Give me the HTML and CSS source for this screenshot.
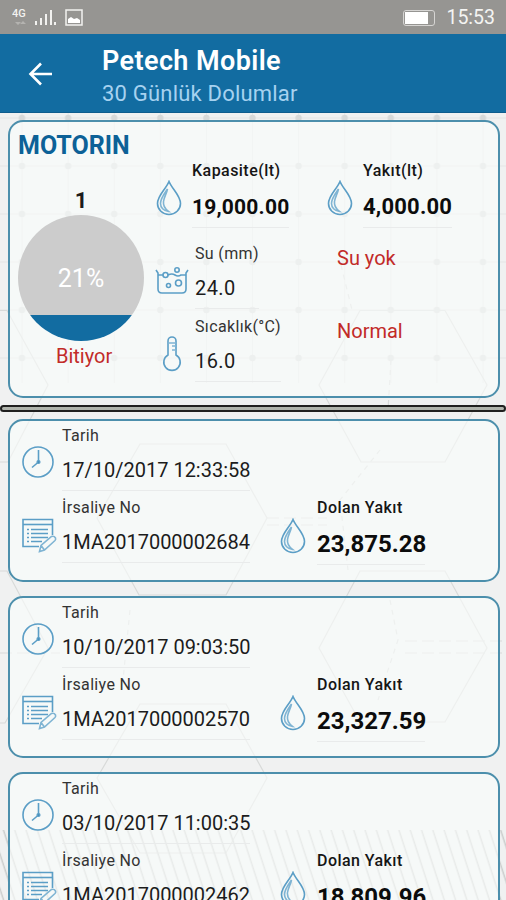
FILE: index.html
```html
<!DOCTYPE html>
<html lang="tr">
<head>
    <meta charset="UTF-8">
    <meta name="viewport" content="width=device-width, initial-scale=1.0">
    <title>Petech Mobile</title>
    <link rel="stylesheet" href="styles.css">
</head>
<body>
    <svg width="0" height="0" class="symbols">
        <symbol id="drop" viewBox="0 0 26 36">
            <path d="M13 1.5C10 9 1.5 15.500 1.500 23.500a11.500 11 0 0 0 23 0C24.500 15.500 16 9 13 1.500z"/>
            <path d="M11.500 9C8 14 4.500 18.500 4.500 23.500c0 4 3 7.500 8 8-4-3-5.500-6-5-10C8 17 10.500 14 11.500 9z" class="light"/>
        </symbol>
        <symbol id="clock" viewBox="0 0 32 32">
            <circle cx="16" cy="16" r="15"/>
            <path d="M16.500 4v12L10 21.500"/>
            <circle cx="16.500" cy="16" r="1.300" class="solid"/>
        </symbol>
        <symbol id="note" viewBox="0 0 35 35">
            <path d="M30.500 17V1.500H1V28.500H17"/>
            <path d="M1 6.500h29.500"/>
            <path d="M5 11.500h2M9 11.500h17M5 15.500h2M9 15.500h17M5 19.500h2M9 19.500h17M5 23.500h2M9 23.500h11"/>
            <path d="M17.500 33.500l1.500-6L29.500 18.500q2.500-1 4 1.500.5 1.500-.5 2.500L22.500 32zM19 27.500l3.500 4.500" class="light"/>
        </symbol>
    </svg>

    <svg class="backdrop" width="506" height="900" viewBox="0 0 506 900">
        <defs>
            <pattern id="dots" x="-1" y="94" width="46.100" height="48" patternUnits="userSpaceOnUse">
                <path d="M23 0v48M0 24h46.100" stroke="#e3e5e5" stroke-width="1"/>
                <circle cx="23" cy="24" r="3.200" fill="#d7d9d9"/>
            </pattern>
            <pattern id="stripes" x="0" y="830" width="11.300" height="12" patternUnits="userSpaceOnUse" patternTransform="skewX(18)">
                <path d="M5 0v12" stroke="#cbcdcc" stroke-width="1.600"/>
            </pattern>
        </defs>
        <rect y="113" width="506" height="270" fill="url(#dots)"/>
        <g fill="none" stroke="#d8dad9" stroke-width="1.200">
            <path d="M319 385L360 310.500H445L487 385 445 462H361z"/>
            <path d="M97 518L140 444H226L267 518 226 595H139z"/>
            <path d="M319 648L360 571H445L487 648 445 722H360z"/>
            <path d="M97 778L140 704H226L267 778 226 853H140z"/>
            <path d="M0 310.500H7L48 385 8 462H0M0 571H7L48 648 5 723H0"/>
            <path d="M267 518h60M267 525h60M405 641h101M405 653h101M0 653h60" stroke-dasharray="12 5"/>
            <path d="M341 265l11 45M391 360l-3 50M380 450l-40 50 8 70M130 610l-8 80M390 600l8 40-20 60" stroke-dasharray="5 5"/>
        </g>
        <rect y="830" width="506" height="70" fill="url(#stripes)"/>
    </svg>

    <header class="status-bar">
        <svg width="72" height="20" viewBox="0 0 72 20" class="status-icons">
            <text x="0" y="9" class="network">4G</text>
            <path d="M3 14h6l-3 3zM8 16h6l-3-3z" fill="#b4b3b0"/>
            <path d="M24 13v4M29 10v7M34 6v11M39 2v15M43 14v3" stroke="#f2f2f0" stroke-width="2"/>
            <rect x="54" y="2" width="16" height="15" fill="none" stroke="#f2f2f0" stroke-width="1.500"/>
            <path d="M56 15v-4l3-2 3 2 3-1 3 2v3z" fill="#fff"/>
        </svg>
        <div class="status-right">
            <span class="battery"><span class="battery-level"></span></span>
            <span class="time">15:53</span>
        </div>
    </header>

    <nav class="app-bar">
        <svg class="back" width="24" height="24" viewBox="0 0 24 24">
            <path d="M24 12H3M13 1.500L2.500 12 13 22.500"/>
        </svg>
        <div>
            <h1>Petech Mobile</h1>
            <p class="subtitle">30 Günlük Dolumlar</p>
        </div>
    </nav>

    <main>
        <section class="card tank">
            <div class="tank-left">
                <h2>MOTORIN</h2>
                <p class="tank-number">1</p>
                <div class="gauge"><span>21%</span></div>
                <p class="tank-state">Bitiyor</p>
            </div>
            <div class="metrics">
                <div class="metric strong">
                    <svg class="icon drop"><use href="#drop"/></svg>
                    <div class="field">
                        <p class="label">Kapasite(lt)</p>
                        <p class="value capacity">19,000.00</p>
                    </div>
                </div>
                <div class="metric strong">
                    <svg class="icon drop"><use href="#drop"/></svg>
                    <div class="field">
                        <p class="label">Yakıt(lt)</p>
                        <p class="value">4,000.00</p>
                    </div>
                </div>
                <div class="metric">
                    <svg class="icon tub" viewBox="0 0 34 28">
                        <path d="M1 3l2 3v16q0 4 4 4h20q4 0 4-4V6l2-3M3 8h5M13 8q4-2 7 0t6 0h5"/>
                        <circle cx="10.500" cy="8" r="2.500"/>
                        <circle cx="22" cy="3" r="2.200"/>
                        <circle cx="13.500" cy="18.500" r="2"/>
                        <circle cx="23.500" cy="16" r="3"/>
                    </svg>
                    <div class="field">
                        <p class="label">Su (mm)</p>
                        <p class="value">24.0</p>
                    </div>
                </div>
                <p class="alert">Su yok</p>
                <div class="metric">
                    <svg class="icon thermo" viewBox="0 0 20 36">
                        <path d="M6 19V5a4 4 0 0 1 8 0V19a8.200 8.200 0 1 1-8 0z"/>
                        <path d="M6 7h8M10 10h4M10 14h4" class="light"/>
                    </svg>
                    <div class="field">
                        <p class="label">Sıcaklık(°C)</p>
                        <p class="value">16.0</p>
                    </div>
                </div>
                <p class="alert">Normal</p>
            </div>
        </section>

        <div class="divider"></div>

        <section class="card record">
            <svg class="icon clock"><use href="#clock"/></svg>
            <div class="field date">
                <p class="label">Tarih</p>
                <p class="value">17/10/2017 12:33:58</p>
            </div>
            <svg class="icon note"><use href="#note"/></svg>
            <div class="field">
                <p class="label">İrsaliye No</p>
                <p class="value">1MA2017000002684</p>
            </div>
            <svg class="icon drop"><use href="#drop"/></svg>
            <div class="field strong">
                <p class="label">Dolan Yakıt</p>
                <p class="value">23,875.28</p>
            </div>
        </section>

        <section class="card record">
            <svg class="icon clock"><use href="#clock"/></svg>
            <div class="field date">
                <p class="label">Tarih</p>
                <p class="value">10/10/2017 09:03:50</p>
            </div>
            <svg class="icon note"><use href="#note"/></svg>
            <div class="field">
                <p class="label">İrsaliye No</p>
                <p class="value">1MA2017000002570</p>
            </div>
            <svg class="icon drop"><use href="#drop"/></svg>
            <div class="field strong">
                <p class="label">Dolan Yakıt</p>
                <p class="value">23,327.59</p>
            </div>
        </section>

        <section class="card record">
            <svg class="icon clock"><use href="#clock"/></svg>
            <div class="field date">
                <p class="label">Tarih</p>
                <p class="value">03/10/2017 11:00:35</p>
            </div>
            <svg class="icon note"><use href="#note"/></svg>
            <div class="field">
                <p class="label">İrsaliye No</p>
                <p class="value">1MA2017000002462</p>
            </div>
            <svg class="icon drop"><use href="#drop"/></svg>
            <div class="field strong">
                <p class="label">Dolan Yakıt</p>
                <p class="value">18,809.96</p>
            </div>
        </section>
    </main>
</body>
</html>
```

FILE: styles.css
```css
* {
    box-sizing: border-box;
    margin: 0;
    padding: 0;
}

body {
    position: relative;
    height: 900px;
    overflow: hidden;
    font-family: Roboto, 'Liberation Sans', sans-serif;
    background: #f0f1f1;
    color: #1c1c1c;
}

.symbols {
    display: none;
}

.backdrop {
    position: absolute;
    top: 0;
    left: 0;
    z-index: -1;
}

/* status bar */
.status-bar {
    display: flex;
    justify-content: space-between;
    height: 34px;
    padding: 8px 11px 0 12px;
    background: #969592;
}

.network {
    font-size: 11px;
    font-weight: 500;
    fill: #f2f2f0;
}

.status-right {
    display: flex;
    align-items: center;
    gap: 11px;
    height: 20px;
}

.battery {
    width: 32px;
    height: 16px;
    padding: 1px;
    border: 1px solid #d6d5d3;
    border-radius: 3px;
}

.battery-level {
    display: block;
    width: 23px;
    height: 12px;
    background: #fff;
}

.time {
    font-size: 19.500px;
    line-height: 20px;
    color: #f4f4f2;
}

/* app bar */
.app-bar {
    display: flex;
    height: 79px;
    padding: 10px 0 0 28px;
    gap: 50px;
    background: #126ca1;
    border-bottom: 1px solid #0e5c8d;
}

.back {
    margin-top: 18px;
    fill: none;
    stroke: #fff;
    stroke-width: 2.600;
}

h1 {
    font-size: 27px;
    font-weight: 600;
    letter-spacing: 0.400px;
    line-height: 34px;
    color: #fff;
}

.subtitle {
    font-size: 22px;
    letter-spacing: 0.200px;
    line-height: 32px;
    color: #a6d2f0;
}

/* cards */
main {
    height: 787px;
    padding-top: 7px;
    overflow: hidden;
}

.card {
    margin: 0 6px 14px 8px;
    border: 2px solid #4c8fac;
    border-radius: 15px;
    background: rgba(250, 253, 252, 0.62);
}

.icon {
    flex: none;
    fill: none;
    stroke: #5b9ec6;
    stroke-width: 1.600;
}

.light {
    stroke: #7fb4d3;
}

.solid {
    fill: #2d7dac;
}

.drop {
    width: 26px;
    height: 36px;
}

.label {
    font-size: 16px;
    letter-spacing: 0.350px;
    line-height: 20px;
    color: #333;
    white-space: nowrap;
}

.value {
    padding-bottom: 8px;
    border-bottom: 1px solid #e9ebeb;
    font-size: 20px;
    line-height: 24px;
    white-space: nowrap;
}

.strong .label {
    font-weight: 500;
    letter-spacing: 0.450px;
    color: #151515;
}

.strong .value {
    font-size: 22px;
    font-weight: 700;
    letter-spacing: 0.200px;
    color: #0c0c0c;
}

/* tank */
.tank {
    display: flex;
    height: 278px;
    margin-bottom: 7px;
}

.tank-left {
    width: 143px;
    padding: 9px 0 0 8px;
}

h2 {
    font-size: 25px;
    font-weight: 700;
    line-height: 30px;
    color: #0c6197;
}

.tank-number {
    margin-top: 27px;
    font-size: 22px;
    font-weight: 700;
    line-height: 26px;
    text-align: center;
    padding-right: 9px;
}

.gauge {
    display: flex;
    justify-content: center;
    align-items: center;
    width: 126px;
    height: 126px;
    margin-top: 1px;
    border-radius: 50%;
    background: linear-gradient(#cccccc 79%, #126ca1 79%);
    color: #fff;
    font-size: 25px;
}

.tank-state {
    margin-top: 3px;
    padding-left: 38px;
    font-size: 20px;
    line-height: 24px;
    color: #c22b28;
}

.metrics {
    display: grid;
    grid-template-columns: 171px 1fr;
    grid-template-rows: 83px 73px 73px;
    padding-top: 39px;
}

.metric {
    display: flex;
    gap: 6px;
}

.metric.strong {
    gap: 10px;
    padding-left: 3px;
}

.metric .drop {
    margin-top: 19px;
}

.metric .value {
    margin-top: 12px;
    letter-spacing: 0.400px;
}

.metric.strong .value {
    margin-top: 14px;
    letter-spacing: 0.200px;
}

.strong .capacity {
    font-size: 21px;
}

.tub {
    width: 34px;
    height: 28px;
    margin: 23px 0 0 2px;
}

.thermo {
    width: 20px;
    height: 36px;
    margin: 19px 7px 0 9px;
}

.alert {
    padding: 2px 0 0 13px;
    font-size: 20px;
    line-height: 24px;
    color: #c22b28;
}

.divider {
    height: 7px;
    margin-bottom: 7px;
    border: 2px solid #20201f;
    border-radius: 4px;
    background: #b0b4ac;
}

/* fill records */
.record {
    display: grid;
    grid-template-columns: 40px 218px 37px 1fr;
    grid-template-rows: 72px 1fr;
    height: 162.500px;
    padding: 5px 12px 0 12px;
}

.record .value {
    margin-top: 12px;
}

.record .date {
    grid-column: 2 / 5;
}

.record .date .value,
.record .field:nth-of-type(2) .value {
    width: 188px;
}

.record .strong .value {
    width: 108px;
    margin-top: 14px;
    font-size: 24px;
    letter-spacing: 0;
}

.clock {
    width: 32px;
    height: 32px;
    margin-top: 20px;
}

.note {
    width: 35px;
    height: 35px;
    margin-top: 20px;
}

.record .drop {
    margin: 20px 0 0 0;
}
```
